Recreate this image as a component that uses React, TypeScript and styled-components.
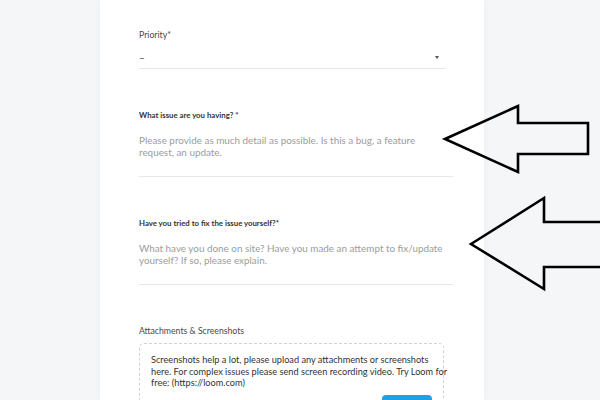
import React from "react";
import styled, { createGlobalStyle } from "styled-components";

const GlobalStyle = createGlobalStyle`
  html, body {
    margin: 0;
    padding: 0;
    background: #f5f6f8;
    font-family: Lato, "Open Sans", sans-serif;
  }
`;

const Page = styled.div`
  width: 600px;
  height: 400px;
  position: relative;
  overflow: hidden;
  display: flex;
`;

const Card = styled.div`
  margin-left: 100px;
  width: 384px;
  height: 100%;
  box-sizing: border-box;
  padding: 29px 0 0 39px;
  background: #ffffff;
  box-shadow: 0 0 6px rgba(0, 0, 0, 0.04);
  display: flex;
  flex-direction: column;
`;

const Field = styled.div<{ first?: boolean }>`
  display: flex;
  flex-direction: column;
  margin-top: ${({ first }) => (first ? 0 : 40)}px;
`;

const Label = styled.div<{ strong?: boolean }>`
  font-size: ${({ strong }) => (strong ? 7.8 : 8.7)}px;
  line-height: 12px;
  font-weight: ${({ strong }) => (strong ? 700 : 400)};
  color: ${({ strong }) => (strong ? "#333" : "#4a4a4a")};
  white-space: nowrap;
`;

const Select = styled.div`
  width: 307px;
  margin-top: 9px;
  padding-bottom: 4px;
  border-bottom: 1px solid #e8e8e8;
  display: flex;
  align-items: center;
  justify-content: space-between;
  font-size: 10px;
  line-height: 14px;
  color: #333;
`;

const Caret = styled.span`
  width: 0;
  height: 0;
  margin-right: 7px;
  border-left: 2px solid transparent;
  border-right: 2px solid transparent;
  border-top: 3px solid #555;
`;

const TextArea = styled.div`
  width: 314px;
  margin-top: 13px;
  padding-bottom: 18px;
  border-bottom: 1px solid #e8e8e8;
  font-size: 9.9px;
  line-height: 12px;
  color: #9c9c9c;
  white-space: nowrap;
`;

const DropZone = styled.div`
  width: 305px;
  margin-top: 6px;
  box-sizing: border-box;
  padding: 10px 10px 0 11px;
  border: 1.5px dashed #d2d2d2;
  border-bottom: none;
  border-radius: 5px 5px 0 0;
  height: 80px;
  display: flex;
  flex-direction: column;
`;

const DropText = styled.div`
  font-size: 9.2px;
  line-height: 11.5px;
  color: #333;
  white-space: nowrap;
`;

const UploadButton = styled.div`
  align-self: flex-end;
  margin: 6px 1px 0 0;
  width: 50px;
  height: 14px;
  background: #1ea1e6;
  border-radius: 4px 4px 0 0;
`;

const Overlay = styled.svg`
  position: absolute;
  left: 0;
  top: 0;
  pointer-events: none;
`;

export default function App() {
  return (
    <>
      <GlobalStyle />
      <Page>
        <Card>
          <Field first>
            <Label>Priority*</Label>
            <Select>
              <span>–</span>
              <Caret />
            </Select>
          </Field>
          <Field>
            <Label strong>What issue are you having? *</Label>
            <TextArea>
              Please provide as much detail as possible. Is this a bug, a feature
              <br />
              request, an update.
            </TextArea>
          </Field>
          <Field>
            <Label strong>Have you tried to fix the issue yourself?*</Label>
            <TextArea>
              What have you done on site? Have you made an attempt to fix/update
              <br />
              yourself? If so, please explain.
            </TextArea>
          </Field>
          <Field>
            <Label>Attachments &amp; Screenshots</Label>
            <DropZone>
              <DropText>
                Screenshots help a lot, please upload any attachments or screenshots
                <br />
                here. For complex issues please send screen recording video. Try Loom for
                <br />
                free: (https://loom.com)
              </DropText>
              <UploadButton />
            </DropZone>
          </Field>
        </Card>
        <Overlay width="600" height="400" viewBox="0 0 600 400">
          <polygon
            points="445,139 518,106 518,123 588,123 588,154 518,154 518,172"
            fill="none"
            stroke="#000"
            strokeWidth="2.6"
            strokeLinejoin="miter"
          />
          <polygon
            points="471,244 544,198 544,222 612,222 612,267 544,267 544,289"
            fill="none"
            stroke="#000"
            strokeWidth="2.6"
            strokeLinejoin="miter"
          />
        </Overlay>
      </Page>
    </>
  );
}
